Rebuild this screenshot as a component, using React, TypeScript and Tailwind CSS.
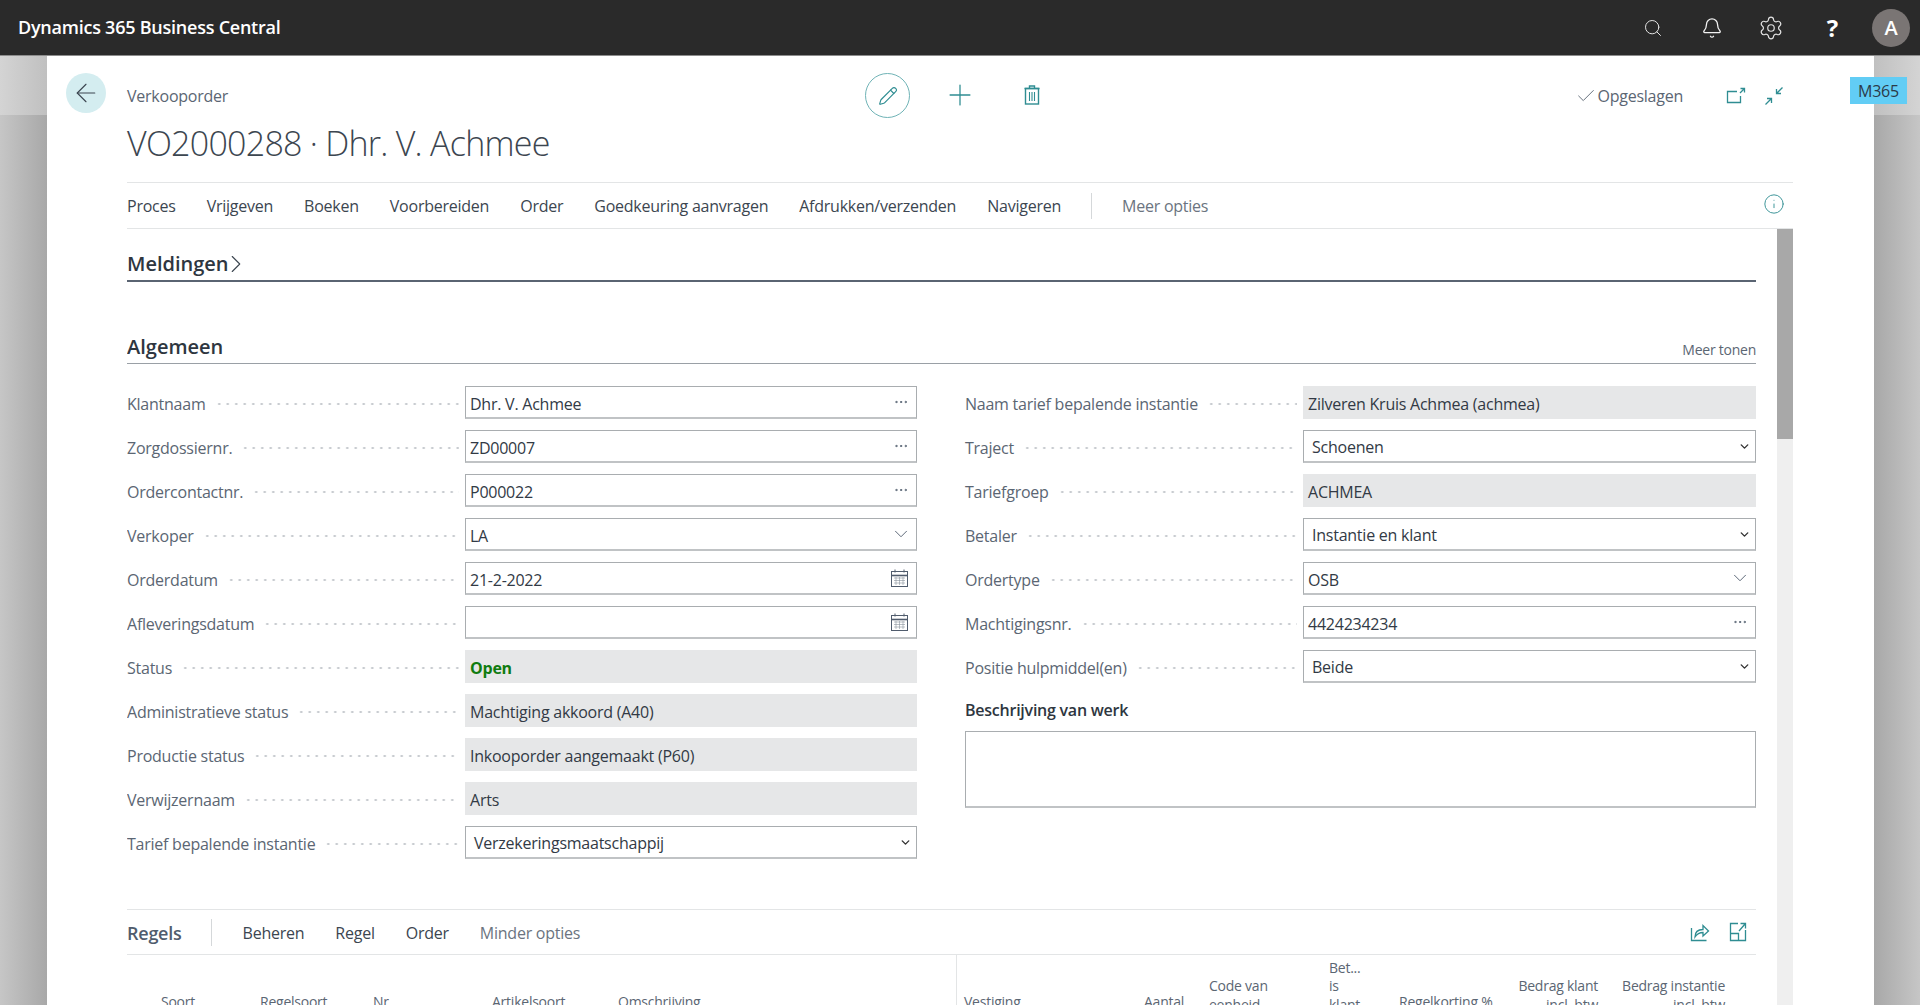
import React from "react";
import { ArrowLeft, Pencil, Plus, Check, Search, Bell, Settings, ChevronDown, Info, ChevronRight, Ellipsis } from "lucide-react";

const TEAL = "#2f8d92";

function CalendarIcon() {
  return (
    <svg width="19" height="20" viewBox="0 0 19 20" fill="none" stroke="#505c6d" strokeWidth="1">
      <rect x="1.5" y="3.5" width="16" height="15" />
      <path d="M1.5 7.5h16" strokeWidth="1.6" />
      <path d="M5 1.5v3M14 1.5v3" />
      <path d="M4 10h11M4 12.5h11M4 15h11M6 9v8M9.5 9v8M13 9v8" strokeWidth="0.6" stroke="#8a939e" />
    </svg>
  );
}

function TrashIcon() {
  return (
    <svg width="16" height="20" viewBox="0 0 16 20" fill="none" stroke={TEAL} strokeWidth="1.4">
      <path d="M0.500 3.500h15M5.500 3.500v-2.500h5v2.500" />
      <rect x="1.500" y="3.500" width="13" height="15.500" />
      <path d="M5.500 7v9M8 7v9M10.500 7v9" strokeWidth="1.1" />
    </svg>
  );
}

function OpenNewIcon() {
  return (
    <svg width="20" height="18" viewBox="0 0 20 18" fill="none" stroke={TEAL} strokeWidth="1.3">
      <path d="M11 4.500H1.500v11h13V9" />
      <path d="M14 6l4-4M14.500 1.500h4v4" />
    </svg>
  );
}

function CollapseIcon() {
  return (
    <svg width="20" height="20" viewBox="0 0 20 20" fill="none" stroke={TEAL} strokeWidth="1.3">
      <path d="M18.500 1.500l-6 6M12.500 3v4.500H17" />
      <path d="M1.500 18.500l6-6M7.500 17v-4.500H3" />
    </svg>
  );
}

function ShareIcon() {
  return (
    <svg width="20" height="20" viewBox="0 0 20 20" fill="none" stroke={TEAL} strokeWidth="1.3">
      <path d="M1.500 6v12.500h15" />
      <path d="M5 15c0-5 3-7.500 8-7.500V3.500l5.500 5.500-5.500 5v-3.500c-3.500 0-6 1.500-8 4.500z" />
    </svg>
  );
}

function ExpandIcon() {
  return (
    <svg width="18" height="20" viewBox="0 0 18 20" fill="none" stroke={TEAL} strokeWidth="1.3">
      <path d="M9 1.500H1.500v17h15V8" />
      <path d="M1.500 11.500h8v7" />
      <path d="M10 9l6-7M11.500 1.500h5v5" />
    </svg>
  );
}

type FieldProps = { label: string; value?: string; kind?: "text" | "dots" | "lookup" | "date" | "readonly" | "select" | "open"; };

function Box({ value, kind = "text" }: { value?: string; kind?: FieldProps["kind"] }) {
  if (kind === "readonly" || kind === "open") {
    return (
      <div className="flex h-[33px] min-w-0 flex-1 items-center bg-[#e6e7e8] pl-[5px] pt-[2px]">
        {kind === "open" ? (
          <span className="font-bold text-[#107c10]">{value}</span>
        ) : (
          <span className="text-[#323a45]">{value}</span>
        )}
      </div>
    );
  }
  return (
    <div className="flex h-[33px] min-w-0 flex-1 items-center justify-between border border-[#a9adb0] border-b-[#c0c3c5] border-b-2 bg-white">
      <span className={kind === "select" ? "pl-[8px] pt-[2px] text-[#323a45]" : "pl-[4px] pt-[3px] text-[#323a45]"}>{value}</span>
      {kind === "dots" && <Ellipsis size={16} strokeWidth={1.4} color="#505c6d" className="mr-[7px]" />}
      {kind === "lookup" && <ChevronDown size={22} strokeWidth={1} color="#505c6d" className="mr-[4px]" />}
      {kind === "date" && <span className="mr-[7px] flex"><CalendarIcon /></span>}
      {kind === "select" && <ChevronDown size={13} strokeWidth={2.6} color="#333333" className="mr-[4px]" />}
    </div>
  );
}

function Row({ label, value, kind }: FieldProps) {
  return (
    <div className="flex h-[33px] items-center">
      <div className="flex w-[338px] shrink-0 items-center pr-[6px] pt-[2px]">
        <span className="whitespace-nowrap text-[#5b6673]">{label}</span>
        <span className="ml-[9px] h-[6px] min-w-0 flex-1 bg-[radial-gradient(circle,#c3c7cc_1px,transparent_1.2px)] bg-[length:8.5px_6px] bg-repeat-x" />
      </div>
      <Box value={value} kind={kind} />
    </div>
  );
}

const leftRows: FieldProps[] = [
  { label: "Klantnaam", value: "Dhr. V. Achmee", kind: "dots" },
  { label: "Zorgdossiernr.", value: "ZD00007", kind: "dots" },
  { label: "Ordercontactnr.", value: "P000022", kind: "dots" },
  { label: "Verkoper", value: "LA", kind: "lookup" },
  { label: "Orderdatum", value: "21-2-2022", kind: "date" },
  { label: "Afleveringsdatum", value: "", kind: "date" },
  { label: "Status", value: "Open", kind: "open" },
  { label: "Administratieve status", value: "Machtiging akkoord (A40)", kind: "readonly" },
  { label: "Productie status", value: "Inkooporder aangemaakt (P60)", kind: "readonly" },
  { label: "Verwijzernaam", value: "Arts", kind: "readonly" },
  { label: "Tarief bepalende instantie", value: "Verzekeringsmaatschappij", kind: "select" },
];

const rightRows: FieldProps[] = [
  { label: "Naam tarief bepalende instantie", value: "Zilveren Kruis Achmea (achmea)", kind: "readonly" },
  { label: "Traject", value: "Schoenen", kind: "select" },
  { label: "Tariefgroep", value: "ACHMEA", kind: "readonly" },
  { label: "Betaler", value: "Instantie en klant", kind: "select" },
  { label: "Ordertype", value: "OSB", kind: "lookup" },
  { label: "Machtigingsnr.", value: "4424234234", kind: "dots" },
  { label: "Positie hulpmiddel(en)", value: "Beide", kind: "select" },
];

const navItems = ["Proces", "Vrijgeven", "Boeken", "Voorbereiden", "Order", "Goedkeuring aanvragen", "Afdrukken/verzenden", "Navigeren"];

function SideStrip({ right }: { right?: boolean }) {
  return (
    <div className="flex flex-1 flex-col">
      <div className={right ? "h-[59px] bg-linear-to-l from-[#d4d4d4] to-[#c0c0c0]" : "h-[59px] bg-linear-to-r from-[#d4d4d4] to-[#c0c0c0]"} />
      <div className={right ? "flex-1 bg-linear-to-l from-[#c6c6c6] to-[#a8a8a8]" : "flex-1 bg-linear-to-r from-[#c6c6c6] to-[#a8a8a8]"} />
    </div>
  );
}

export default function App() {
  return (
    <div className="relative flex h-[1005px] w-[1920px] flex-col overflow-hidden bg-white font-['Open_Sans',sans-serif] text-[16px] tracking-[-0.015em]">
      <header className="flex h-[56px] shrink-0 items-center justify-between border-b border-[#8c8c8c] bg-[#2a2a2a] pl-[18px] pr-[10px]">
        <span className="text-[18px] font-semibold text-white">Dynamics 365 Business Central</span>
        <div className="flex items-center">
          <Search size={20} strokeWidth={1.2} color="#e4e4e4" />
          <Bell size={22} strokeWidth={1.4} color="#f2f2f2" className="ml-[38px]" />
          <Settings size={26} strokeWidth={1.1} color="#e4e4e4" className="ml-[35px]" />
          <span className="ml-[43px] text-[24px] font-bold leading-none text-white">?</span>
          <div className="ml-[34px] flex h-[38px] w-[38px] items-center justify-center rounded-full bg-[#7a7574] text-[20px] font-semibold text-white">A</div>
        </div>
      </header>

      <div className="flex min-h-0 flex-1">
        <div className="flex w-[47px]"><SideStrip /></div>
        <main className="flex min-w-0 flex-1 flex-col pr-[81px]">
          <div className="flex items-start pl-[19px] pt-[17px]">
            <div className="flex h-[40px] w-[40px] shrink-0 items-center justify-center rounded-full bg-[#d4edf0]">
              <ArrowLeft size={30} strokeWidth={0.9} color="#3c4650" />
            </div>
            <span className="ml-[21px] mt-[11px] w-[738px] shrink-0 text-[#5b6673]">Verkooporder</span>
            <div className="flex h-[45px] w-[45px] shrink-0 items-center justify-center rounded-full border border-[#6fb3b6]">
              <Pencil size={20} strokeWidth={1.4} color={TEAL} />
            </div>
            <Plus size={34} strokeWidth={0.9} color={TEAL} className="ml-[33px] mt-[5px] shrink-0" />
            <span className="ml-[47px] mt-[12px] flex shrink-0"><TrashIcon /></span>
            <div className="ml-auto mt-[11px] flex items-center text-[#5b6673]">
              <Check size={22} strokeWidth={1} color="#5b6673" />
              <span>Opgeslagen</span>
              <span className="ml-[43px] flex"><OpenNewIcon /></span>
              <span className="ml-[18px] mr-[9px] flex"><CollapseIcon /></span>
            </div>
          </div>
          <h1 className="ml-[80px] mt-[-1px] h-[52px] text-[34px] font-light leading-[52px] tracking-[-0.022em] text-[#3c4650]">VO2000288 · Dhr. V. Achmee</h1>

          <nav className="ml-[80px] mt-[13px] flex h-[47px] shrink-0 items-center border-y border-[#e3e5e6] text-[#3c4650]">
            <div className="flex items-center gap-[31px]">
              {navItems.map((n) => (
                <span key={n} className="whitespace-nowrap">{n}</span>
              ))}
            </div>
            <span className="ml-[30px] h-[26px] w-px bg-[#d5d8da]" />
            <span className="ml-[30px] text-[#6b7480]">Meer opties</span>
            <Info size={22} strokeWidth={1} color={TEAL} className="ml-auto mb-[3px] mr-[8px]" />
          </nav>

          <div className="ml-[80px] flex min-h-0 flex-1">
            <div className="w-[1629px] shrink-0 overflow-hidden">
              <div className="flex h-[53px] items-end border-b-2 border-[#5a6472] pb-[2px]">
                <span className="text-[20px] font-semibold leading-[28px] tracking-normal text-[#2e3640]">Meldingen</span>
                <ChevronRight size={30} strokeWidth={0.9} color="#3c4650" className="mb-[-1px] ml-[-8px]" />
              </div>
              <div className="mt-[50px] flex h-[32px] items-end justify-between border-b border-[#9aa0a6] pb-[3px]">
                <span className="text-[20px] font-semibold leading-[26px] tracking-normal text-[#2e3640]">Algemeen</span>
                <span className="text-[14px] text-[#5b6673]">Meer tonen</span>
              </div>

              <div className="mt-[22px] flex items-start">
                <div className="flex w-[790px] flex-col gap-[11px]">
                  {leftRows.map((r) => (
                    <Row key={r.label} {...r} />
                  ))}
                </div>
                <div className="ml-[48px] flex w-[791px] flex-col gap-[11px]">
                  {rightRows.map((r) => (
                    <Row key={r.label} {...r} />
                  ))}
                  <div className="mt-[6px] font-semibold leading-[20px] text-[#2e3640]">Beschrijving van werk</div>
                  <div className="h-[77px] border border-[#a9adb0] border-b-[#c0c3c5] border-b-2" />
                </div>
              </div>

              <div className="mt-[50px] flex h-[46px] items-center border-y border-[#e3e5e6]">
                <span className="pt-[2px] text-[18px] font-semibold text-[#505c6d]">Regels</span>
                <span className="ml-[29px] h-[27px] w-px bg-[#d5d8da]" />
                <span className="ml-[31px] pt-[2px] text-[#3c4650]">Beheren</span>
                <span className="ml-[31px] pt-[2px] text-[#3c4650]">Regel</span>
                <span className="ml-[31px] pt-[2px] text-[#3c4650]">Order</span>
                <span className="ml-[31px] pt-[2px] text-[#6b7480]">Minder opties</span>
                <span className="ml-auto flex"><ShareIcon /></span>
                <span className="ml-[19px] mr-[9px] flex"><ExpandIcon /></span>
              </div>

              <div className="flex h-[56px] items-end text-[14px] leading-[18.5px] text-[#5b6673]">
                <div className="flex h-[56px] w-[830px] shrink-0 items-end border-r border-[#e3e5e6]">
                  <span className="ml-[34px] w-[99px]">Soort</span>
                  <span className="w-[113px]">Regelsoort</span>
                  <span className="w-[119px]">Nr.</span>
                  <span className="w-[126px]">Artikelsoort</span>
                  <span>Omschrijving</span>
                </div>
                <div className="flex items-end">
                  <span className="ml-[7px] w-[180px]">Vestiging</span>
                  <span className="w-[40px] text-right">Aantal</span>
                  <span className="mb-[-3px] ml-[25px] w-[120px]">Code van<br />eenheid</span>
                  <span className="mb-[-3px] w-[70px]">Bet...<br />is<br />klant</span>
                  <span className="w-[110px]">Regelkorting %</span>
                  <span className="mb-[-3px] w-[89px] text-right">Bedrag klant<br />incl. btw</span>
                  <span className="mb-[-3px] ml-[20px] w-[107px] text-right">Bedrag instantie<br />incl. btw</span>
                </div>
              </div>
            </div>
            <div className="ml-[21px] w-[16px] shrink-0 bg-[#efefef]">
              <div className="h-[210px] bg-[#a8a8a8]" />
            </div>
          </div>
        </main>
        <div className="flex w-[46px]"><SideStrip right /></div>
      </div>

      <div className="absolute left-[1850px] top-[77px] flex h-[27px] w-[57px] items-center justify-center bg-[#62cdf5] text-[#2b3a48]">M365</div>
    </div>
  );
}
